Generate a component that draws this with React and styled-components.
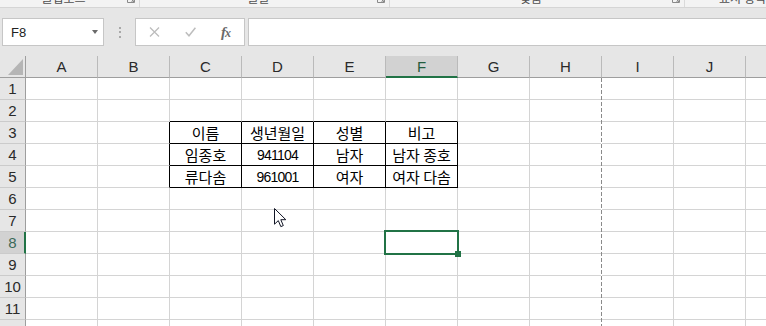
import React from "react";
import styled, { createGlobalStyle } from "styled-components";

const GREEN = "#217346";
const COLS = ["A", "B", "C", "D", "E", "F", "G", "H", "I", "J", "K"];
const ROW_COUNT = 12;
const SEL = { col: 5, row: 8 };

const table = {
	3: ["이름", "생년월일", "성별", "비고"],
	4: ["임종호", "941104", "남자", "남자 종호"],
	5: ["류다솜", "961001", "여자", "여자 다솜"],
};

const groups = [
	{ label: "클립보드", w: 140 },
	{ label: "글꼴", w: 250 },
	{ label: "맞춤", w: 295 },
	{ label: "표시 형식", w: 0 },
];

export default function App() {
	function cellText(r, c) {
		const row = table[r];
		if (!row || c < 2 || c > 5) return null;
		const text = row[c - 2];
		if (/^\d+$/.test(text)) return <Num>{text}</Num>;
		return text;
	}

	const rows = [];
	for (let r = 1; r <= ROW_COUNT; r++) {
		rows.push(
			<RowHeader key={"h" + r} $sel={r === SEL.row}>
				{r}
			</RowHeader>
		);
		COLS.forEach((_, c) => {
			const blackRight = r >= 3 && r <= 5 && c >= 1 && c <= 5;
			const blackBottom = r >= 2 && r <= 5 && c >= 2 && c <= 5;
			const selected = r === SEL.row && c === SEL.col;
			rows.push(
				<Cell key={r + "-" + c} $br={blackRight} $bb={blackBottom}>
					{cellText(r, c)}
					{selected && (
						<Selection>
							<FillHandle />
						</Selection>
					)}
				</Cell>
			);
		});
	}

	return (
		<Window>
			<GlobalStyle />
			<Ribbon>
				{groups.map((g) => (
					<RibbonGroup key={g.label} $w={g.w}>
						<GroupLabel>{g.label}</GroupLabel>
						{g.w > 0 && (
							<Launcher width="8" height="8" viewBox="0 0 8 8">
								<path d="M0.5 0.5v7h7v-3" fill="none" stroke="#8a8a8a" />
								<path d="M3 3l4 4M4 7h3V4" fill="none" stroke="#8a8a8a" />
							</Launcher>
						)}
					</RibbonGroup>
				))}
			</Ribbon>

			<FormulaBar>
				<NameBox>
					<span>F8</span>
					<DropArrow />
				</NameBox>
				<Grip>
					<i />
					<i />
					<i />
				</Grip>
				<IconBox>
					<IconSlot>
						<svg width="11" height="10" viewBox="0 0 11 10">
							<path d="M1 0.5l9 9M10 0.5l-9 9" stroke="#bdbdbd" strokeWidth="1.3" />
						</svg>
					</IconSlot>
					<IconSlot>
						<svg width="11" height="10" viewBox="0 0 11 10">
							<path d="M0.8 5.2l3.2 3.6L10.4 0.8" fill="none" stroke="#bdbdbd" strokeWidth="1.5" />
						</svg>
					</IconSlot>
					<IconSlot>
						<Fx>
							<b>f</b>x
						</Fx>
					</IconSlot>
				</IconBox>
				<Input />
			</FormulaBar>

			<Sheet>
				<Corner>
					<Triangle />
				</Corner>
				{COLS.map((c, i) => (
					<ColHeader key={c} $sel={i === SEL.col}>
						{c}
					</ColHeader>
				))}
				{rows}
			</Sheet>

			<PageBreak />
			<Cursor width="13" height="20" viewBox="0 0 13 20">
				<path
					d="M0.5 0.5V16.2L4.3 12.6L6.8 18.6L9.3 17.6L6.8 11.7H11.8Z"
					fill="#fff"
					stroke="#121626"
					strokeWidth="1"
				/>
			</Cursor>
		</Window>
	);
}

const GlobalStyle = createGlobalStyle`
	html, body {
		margin: 0;
		padding: 0;
		overflow: hidden;
		background: #e6e6e6;
	}
`;

const Window = styled.div`
	position: relative;
	width: 766px;
	height: 326px;
	overflow: hidden;
	background: #e6e6e6;
	font-family: "Liberation Sans", "Noto Sans CJK KR", sans-serif;
`;

const Ribbon = styled.div`
	display: flex;
	height: 8px;
	box-sizing: border-box;
	background: #f3f3f3;
	border-bottom: 1px solid #d5d5d5;
	overflow: hidden;
`;

const RibbonGroup = styled.div`
	display: flex;
	align-items: flex-start;
	box-sizing: border-box;
	flex: ${(p) => (p.$w ? `0 0 ${p.$w}px` : "1")};
	border-right: ${(p) => (p.$w ? "1px solid #dadada" : "none")};
	padding-right: 3px;
`;

const GroupLabel = styled.div`
	flex: 1;
	text-align: center;
	margin-top: -9px;
	font: 12px/14px "Noto Sans CJK KR", sans-serif;
	color: #505050;
	white-space: nowrap;
	${RibbonGroup}:last-child & {
		text-align: left;
		padding-left: 34px;
	}
`;

const Launcher = styled.svg`
	margin-top: -5px;
	margin-right: 1px;
	flex-shrink: 0;
`;

const FormulaBar = styled.div`
	display: flex;
	align-items: flex-start;
	height: 48px;
	box-sizing: border-box;
	padding: 10px 0 0 2px;
`;

const NameBox = styled.div`
	width: 102px;
	height: 28px;
	box-sizing: border-box;
	display: flex;
	align-items: center;
	justify-content: space-between;
	padding: 0 5px 0 8px;
	background: #fff;
	border: 1px solid #c6c6c6;
	font-size: 13px;
	color: #222;
`;

const DropArrow = styled.span`
	width: 0;
	height: 0;
	border-left: 3px solid transparent;
	border-right: 3px solid transparent;
	border-top: 4px solid #6a6a6a;
`;

const Grip = styled.div`
	width: 31px;
	height: 28px;
	display: flex;
	flex-direction: column;
	align-items: center;
	justify-content: center;
	gap: 2.5px;

	i {
		width: 2px;
		height: 2px;
		background: #a8a8a8;
	}
`;

const IconBox = styled.div`
	width: 110px;
	height: 28px;
	box-sizing: border-box;
	display: flex;
	align-items: center;
	background: #fff;
	border: 1px solid #c6c6c6;
`;

const IconSlot = styled.div`
	width: 36px;
	display: flex;
	justify-content: center;
	align-items: center;
`;

const Fx = styled.i`
	font-family: "Liberation Serif", serif;
	font-size: 12px;
	font-weight: bold;
	color: #6a6a6a;
	line-height: 1;

	b {
		font-size: 15px;
		margin-right: -1px;
	}
`;

const Input = styled.div`
	flex: 1;
	margin-left: 3px;
	height: 28px;
	box-sizing: border-box;
	background: #fff;
	border: 1px solid #c6c6c6;
	border-right: none;
`;

const Sheet = styled.div`
	display: grid;
	grid-template-columns: 26px repeat(11, 72px);
	grid-auto-rows: 22px;
`;

const Corner = styled.div`
	display: flex;
	align-items: flex-end;
	justify-content: flex-end;
	padding: 0 2px 2px 0;
	box-sizing: border-box;
	background: #e6e6e6;
	border-right: 1px solid #9e9e9e;
	border-bottom: 1px solid #9e9e9e;
`;

const Triangle = styled.span`
	width: 15px;
	height: 16px;
	background: #b5b5b5;
	clip-path: polygon(100% 0, 100% 100%, 0 100%);
`;

const ColHeader = styled.div`
	display: flex;
	align-items: center;
	justify-content: center;
	box-sizing: border-box;
	background: ${(p) => (p.$sel ? "#d2d2d2" : "#e6e6e6")};
	border-right: 1px solid #bababa;
	border-bottom: ${(p) => (p.$sel ? `2px solid ${GREEN}` : "1px solid #9e9e9e")};
	padding-top: ${(p) => (p.$sel ? "1px" : "0")};
	font-size: 15px;
	color: ${(p) => (p.$sel ? "#235c3e" : "#2a2a2a")};
`;

const RowHeader = styled.div`
	display: flex;
	align-items: center;
	justify-content: center;
	box-sizing: border-box;
	background: ${(p) => (p.$sel ? "#d2d2d2" : "#e6e6e6")};
	border-right: ${(p) => (p.$sel ? `2px solid ${GREEN}` : "1px solid #9e9e9e")};
	border-bottom: 1px solid #cbcbcb;
	padding-left: ${(p) => (p.$sel ? "1px" : "0")};
	font-size: 15px;
	color: ${(p) => (p.$sel ? "#3b6a5a" : "#2a2a2a")};
`;

const Cell = styled.div`
	position: relative;
	display: flex;
	align-items: center;
	justify-content: center;
	box-sizing: border-box;
	background: #fff;
	border-right: 1px solid ${(p) => (p.$br ? "#000" : "#d4d4d4")};
	border-bottom: 1px solid ${(p) => (p.$bb ? "#000" : "#d4d4d4")};
	font: 15px "Noto Sans CJK KR", sans-serif;
	color: #000;
	white-space: nowrap;
`;

const Num = styled.span`
	font-family: "Liberation Sans", sans-serif;
	font-size: 14px;
	letter-spacing: -0.8px;
`;

const Selection = styled.div`
	position: absolute;
	top: -2px;
	left: -2px;
	width: 75px;
	height: 25px;
	box-sizing: border-box;
	border: 2px solid ${GREEN};
	z-index: 3;
	pointer-events: none;
`;

const FillHandle = styled.span`
	position: absolute;
	right: -4px;
	bottom: -4px;
	width: 6px;
	height: 6px;
	background: ${GREEN};
`;

const PageBreak = styled.div`
	position: absolute;
	left: 601px;
	top: 78px;
	bottom: 0;
	width: 1px;
	background: repeating-linear-gradient(to bottom, #8a8a8a 0 4px, #fff 4px 6px);
	z-index: 2;
`;

const Cursor = styled.svg`
	position: absolute;
	left: 274px;
	top: 208px;
	z-index: 5;
`;
